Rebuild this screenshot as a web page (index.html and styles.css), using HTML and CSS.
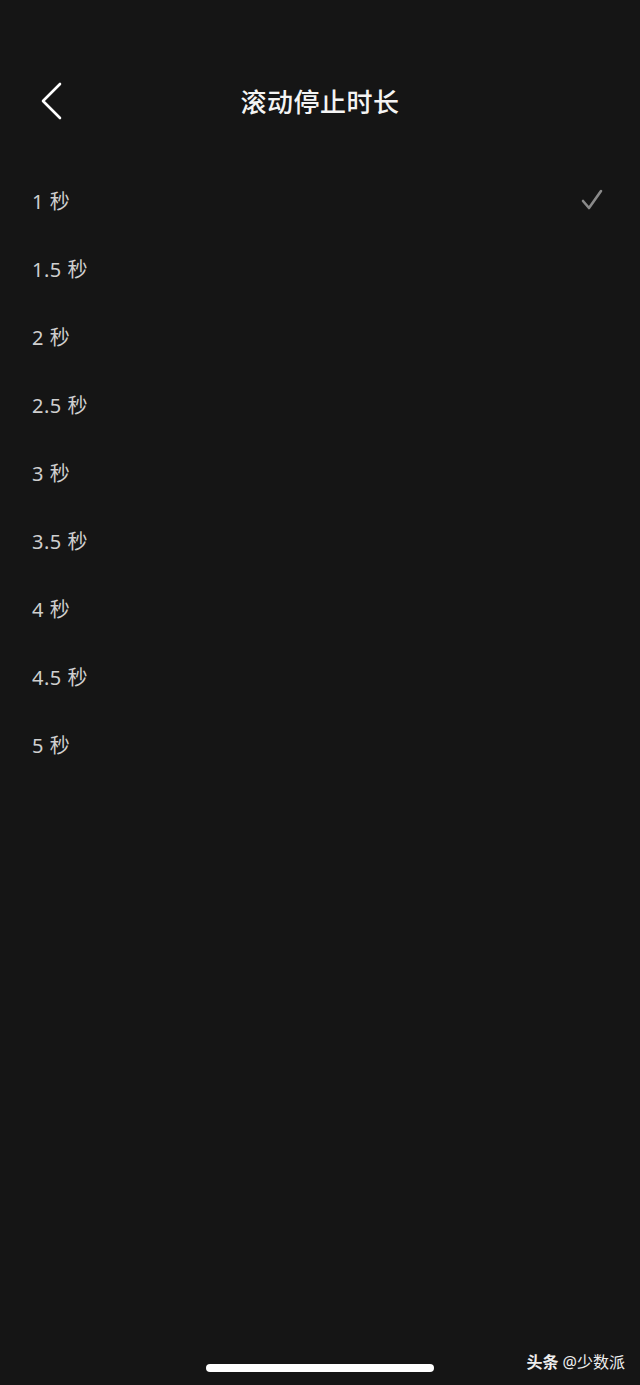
FILE: index.html
```html
<!DOCTYPE html>
<html lang="zh">
<head>
  <meta charset="UTF-8">
  <meta name="viewport" content="width=device-width, initial-scale=1.0">
  <title>滚动停止时长</title>
  <link rel="stylesheet" href="styles.css">
</head>
<body>
<div class="screen">
  <div class="nav-bar">
    <svg class="back" width="24" height="38" viewBox="0 0 24 38">
      <path d="M21 2 L4 19 L21 36" fill="none" stroke="#fff" stroke-width="2.6" stroke-linecap="round" stroke-linejoin="round"/>
    </svg>
    <div class="title">滚动停止时长</div>
  </div>
  <div class="options">
    <div class="option"><span>1 秒</span>
      <svg class="check" width="24" height="24" viewBox="0 0 24 24">
        <path d="M3 13 L9 20 L21 3" fill="none" stroke="#8a8a8a" stroke-width="2.6" stroke-linecap="round" stroke-linejoin="round"/>
      </svg>
    </div>
    <div class="option"><span>1.5 秒</span></div>
    <div class="option"><span>2 秒</span></div>
    <div class="option"><span>2.5 秒</span></div>
    <div class="option"><span>3 秒</span></div>
    <div class="option"><span>3.5 秒</span></div>
    <div class="option"><span>4 秒</span></div>
    <div class="option"><span>4.5 秒</span></div>
    <div class="option"><span>5 秒</span></div>
  </div>
  <div class="bottom">
    <div class="home-bar"></div>
    <div class="watermark"><b>头条</b> @少数派</div>
  </div>
</div>
</body>
</html>
```

FILE: styles.css
```css
body {
  margin: 0;
  padding: 0;
  background-color: #151515;
  font-family: "Noto Sans", "Noto Sans CJK SC", sans-serif;
}
.screen {
  height: 1385px;
  display: flex;
  flex-direction: column;
  position: relative;
}
.nav-bar {
  height: 68px;
  margin-top: 67px;
  display: flex;
  align-items: center;
  justify-content: center;
  position: relative;
}
.back {
  position: absolute;
  left: 39px;
  top: 15px;
}
.title {
  color: #f4f4f4;
  font-size: 26px;
  font-weight: 500;
  letter-spacing: 0.5px;
}
.options {
  display: flex;
  flex-direction: column;
  margin-top: 31px;
}
.option {
  height: 68px;
  padding: 0 36px 0 32px;
  display: flex;
  align-items: center;
  justify-content: space-between;
  color: #cfcfcf;
  font-size: 20px;
  letter-spacing: 0.5px;
}
.bottom {
  margin-top: auto;
  height: 50px;
  position: relative;
}
.home-bar {
  position: absolute;
  left: 206px;
  top: 29px;
  width: 228px;
  height: 8px;
  border-radius: 4px;
  background: #fff;
}
.watermark {
  position: absolute;
  right: 15px;
  top: 14px;
  color: #eee;
  font-size: 16px;
}
.watermark b {
  font-weight: 700;
}
```
